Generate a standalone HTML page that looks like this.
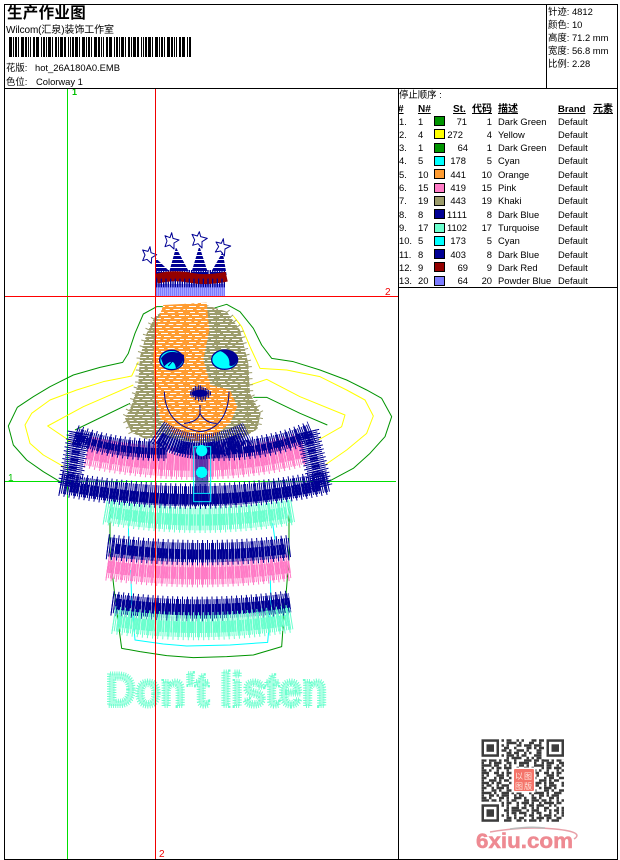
<!DOCTYPE html>
<html><head><meta charset="utf-8"><style>
html,body{margin:0;padding:0;background:#fff;width:620px;height:860px;overflow:hidden}
svg{display:block}
text{font-family:"Liberation Sans","Noto Sans CJK SC",sans-serif;font-size:9.4px;fill:#000}
.b{font-weight:bold;font-size:10px}
.e{text-anchor:end}
.ln,.s{fill:none;stroke-linejoin:round}
.bl{stroke:#000094}.pk{stroke:#ff7bc6}.tq{stroke:#6bffce}
</style></head><body>
<svg width="620" height="860" viewBox="0 0 620 860" xmlns="http://www.w3.org/2000/svg">
<defs>
<pattern id="kh" patternUnits="userSpaceOnUse" width="93" height="54"><rect width="93" height="54" fill="#9c9c6b"/><path stroke="#fff" stroke-width="3" d="M3 4.500h21M32 4.500h14M55 4.500h24M85 4.500h6M12 13.500h17M38 13.500h24M70 13.500h16M0 22.500h9M18 22.500h24M50 22.500h12M72 22.500h19M6 31.500h14M27 31.500h22M58 31.500h24M0 40.500h18M25 40.500h12M45 40.500h22M75 40.500h14M9 49.500h24M41 49.500h16M64 49.500h20"/></pattern>
<pattern id="or" patternUnits="userSpaceOnUse" width="93" height="54"><rect width="93" height="54" fill="#ff9c31"/><path stroke="#fff" stroke-width="3" d="M3 4.500h18M32 4.500h12M55 4.500h21M85 4.500h6M12 13.500h15M38 13.500h21M70 13.500h14M0 22.500h9M18 22.500h21M50 22.500h10M72 22.500h17M6 31.500h12M27 31.500h20M58 31.500h21M0 40.500h16M25 40.500h10M45 40.500h19M75 40.500h12M9 49.500h21M41 49.500h14M64 49.500h18"/></pattern>
<pattern id="bs" patternUnits="userSpaceOnUse" width="12" height="12"><rect width="12" height="12" fill="#000094"/><rect y="9" width="12" height="3" fill="#fff"/></pattern>
</defs>

<path d="M67.5 88V859" stroke="#00e000" stroke-width="1"/>
<path d="M4 481.500H396" stroke="#00e000" stroke-width="1"/>

<!-- torso -->
<g transform="translate(90 490) scale(.33333)">
<path class="ln" stroke="#009400" stroke-width="3" d="M60 50L60 190L72 295L85 400L95 475L150 485L230 497L310 503L410 500L490 495L575 470L580 400L590 290L597 200L597 50"/>
<path class="ln" stroke="#00ffff" stroke-width="3" d="M115 100L117 175M122 240L125 330L135 450L220 462L290 468L420 465L533 457L543 340L540 235M548 100L555 150"/>
<g class="s tq"><path stroke-width="84" stroke-dasharray="3 12" d="M45 62Q330 112 612 62"/><path stroke-width="68" stroke-dasharray="3 3" d="M45 62Q330 112 612 62"/><path stroke-width="34" stroke-dasharray="6 2" d="M65 68Q330 112 590 68"/></g>
<g class="s pk"><path stroke-width="84" stroke-dasharray="3 12" d="M52 230Q330 270 602 230"/><path stroke-width="68" stroke-dasharray="3 3" d="M52 230Q330 270 602 230"/><path stroke-width="36" stroke-dasharray="6 2" d="M52 230Q330 270 602 230"/></g>
<g class="s bl"><path stroke-width="76" stroke-dasharray="3 12" d="M52 170Q330 205 602 172"/><path stroke-width="58" stroke-dasharray="3 3" d="M52 170Q330 205 602 172"/><path stroke-width="30" stroke-dasharray="7 2" d="M75 176Q330 210 585 178"/></g>
<g class="s bl"><path stroke-width="74" stroke-dasharray="3 12" d="M66 340Q330 375 600 338"/><path stroke-width="58" stroke-dasharray="3 3" d="M66 340Q330 375 600 338"/><path stroke-width="34" stroke-dasharray="8 2" d="M76 342Q330 378 600 340"/></g>
<g class="s tq"><path stroke-width="84" stroke-dasharray="3 12" d="M70 390Q330 430 606 385"/><path stroke-width="66" stroke-dasharray="3 3" d="M70 390Q330 430 606 385"/><path stroke-width="34" stroke-dasharray="6 2" d="M82 394Q330 432 595 390"/></g>
</g>

<!-- main -->
<g transform="translate(0 290) scale(.33333)">
<path class="ln" stroke="#009400" stroke-width="3" d="M180 575L130 545L80 510L40 465L25 408L52 352L100 320L150 290L220 255L300 232L368 217L385 190L405 130L430 72L470 50L510 50M640 55L680 43L720 65L760 115L785 165L815 205L880 215L960 240L1040 270L1100 300L1145 325L1175 380L1155 440L1110 490L1060 535L985 575M982 405L900 370L800 322L760 322M225 420L390 340"/>
<path class="ln" stroke="#ffff00" stroke-width="3" d="M200 535L130 495L90 460L75 405L95 370L150 330L230 300L310 275L395 258L415 215M700 78L725 110L750 170L780 235L860 240L960 260L1040 300L1095 330L1120 378L1100 430L1040 480L975 525M220 460L143 408L250 350L400 285M750 285L800 268L900 320L1035 375L1025 410L955 450"/>
<!-- pink -->
<g class="s pk"><path stroke-width="104" stroke-dasharray="3 12" d="M262 482Q600 555 912 477"/><path stroke-width="88" stroke-dasharray="3 3" d="M262 482Q600 555 912 477"/><path stroke-width="50" stroke-dasharray="6 2" d="M262 482Q600 555 912 477"/></g>
<!-- hair -->
<path fill="url(#kh)" d="M510 48L610 42L680 65L720 120L745 220L750 310L782 370L772 418L730 442L600 460L480 440L440 448L395 428L375 385L395 345L415 280L420 200L440 130L465 80Z"/>
<path class="s" stroke="#9c9c6b" stroke-width="20" stroke-dasharray="3 15" d="M680 65L720 120L745 220L750 310L782 370L772 418M395 428L375 385L395 345L415 280L420 200L440 130L465 80"/>
<!-- face -->
<path fill="url(#or)" d="M490 45L620 38L628 120L610 210L632 285L690 300L712 350L690 400L640 440L590 455L520 430L480 385L465 300L460 200L470 100Z"/>
<!-- collar -->
<g class="s bl"><path stroke-width="66" stroke-dasharray="3 12" d="M225 437Q350 482 500 480M640 480Q800 482 935 425"/><path stroke-width="50" stroke-dasharray="3 3" d="M225 437Q350 482 500 480M640 480Q800 482 935 425"/><path stroke-width="20" stroke-dasharray="7 2" d="M232 442Q350 486 500 484M640 484Q800 486 925 432"/></g>
<path class="s bl" stroke-width="76" stroke-dasharray="3 4" d="M472 425Q590 510 745 432"/>
<path class="s bl" stroke-width="38" stroke-dasharray="6 2" d="M480 445Q590 510 730 445"/>
<g class="s bl"><path stroke-width="72" stroke-dasharray="3 9" d="M238 428L208 590M922 425L962 592"/><path stroke-width="58" stroke-dasharray="3 3" d="M238 428L208 590M922 425L962 592"/><path stroke-width="24" stroke-dasharray="5 3" d="M238 428L208 590M922 425L962 592"/></g>
<g class="s bl"><path stroke-width="76" stroke-dasharray="3 12" d="M182 580Q600 660 985 575"/><path stroke-width="60" stroke-dasharray="3 3" d="M182 580Q600 660 985 575"/><path stroke-width="32" stroke-dasharray="8 2" d="M210 590Q600 668 960 586"/></g>
<!-- tie -->
<path stroke="#000094" stroke-width="40" stroke-dasharray="4 2" d="M605 490V632" fill="none"/>
<rect x="581" y="470" width="51" height="165" fill="none" stroke="#00e8ff" stroke-width="3"/>
<circle cx="605" cy="482" r="17" fill="#00ffff"/><circle cx="605" cy="547" r="17" fill="#00ffff"/>
<path d="M581 610H632" stroke="#00e8ff" stroke-width="3"/>
<!-- eyes -->
<ellipse cx="515" cy="210" rx="36" ry="29" fill="#00ffff" stroke="#000094" stroke-width="4"/>
<path d="M483 205Q505 172 552 195Q552 222 528 235Q522 198 492 230Z" fill="#000094"/>
<path d="M495 222L515 195M505 228L525 205" stroke="#000094" stroke-width="3" fill="none"/>
<ellipse cx="674" cy="209" rx="39" ry="29" fill="#00ffff" stroke="#000094" stroke-width="4"/>
<path d="M658 182Q700 172 714 208Q702 234 688 226Q692 195 658 182Z" fill="#000094"/>
<!-- nose -->
<path stroke="#000094" stroke-width="3" fill="none" d="M572 304v12M576 298v24M581 294v28M586 288v42M591 290v36M596 286v48M601 286v44M606 290v46M611 292v36M616 294v38M621 296v26M626 300v24M631 304v12"/>
<ellipse cx="600" cy="310" rx="24" ry="11" fill="#000094"/>
<path class="ln" stroke="#000094" stroke-width="3" d="M493 305C495 380 540 415 600 425C650 420 686 380 687 305M600 345V370C595 390 575 398 552 400M600 370C612 392 630 400 650 400"/>
</g>

<text x="106" y="706" style="font-size:47px;font-weight:bold;fill:#6bffce;fill-opacity:.55;stroke:#6bffce;stroke-width:4;stroke-dasharray:1 1.500" textLength="221" lengthAdjust="spacingAndGlyphs">Don't listen</text>

<!-- crown -->
<g transform="translate(120 220) scale(.33333)">
<path fill="url(#bs)" d="M105 112L160 165H106ZM168 82L212 165H145ZM238 78L266 165H212ZM308 96L320 165H268Z"/>
<path class="s" stroke="#7b7bff" stroke-width="36" stroke-dasharray="5 1" d="M107 210H315"/>
<path class="s" stroke="#000094" stroke-width="52" stroke-dasharray="4 3" d="M108 176H318"/>
<path class="s" stroke="#940000" stroke-width="30" d="M110 176Q160 163 210 173T320 170"/>
<path class="s" stroke="#000094" stroke-width="20" stroke-dasharray="4 10" d="M108 186H318"/>
<g class="ln" stroke="#000094" stroke-width="3" fill="none">
<path d="M90 80L93 98L110 104L95 113L94 130L81 118L68 122L75 105L68 90L84 94Z"/>
<path d="M155 38L159 55L177 60L162 69L162 87L149 75L135 80L141 63L135 47L150 53Z"/>
<path d="M238 35L242 50L262 55L246 65L246 84L234 71L218 76L224 60L216 43L232 48Z"/>
<path d="M310 56L312 73L332 78L315 87L313 108L302 93L286 96L296 80L288 66L304 70Z"/>
</g>
</g>

<path d="M155.500 88V859" stroke="#f00000" stroke-width="1"/>
<path d="M4 296.500H398" stroke="#ff0000" stroke-width="1"/>
<text x="72" y="95" style="font-size:9px;font-weight:bold;fill:#00c000">1</text>
<text x="8" y="481" style="font-size:10px;fill:#00c000">1</text>
<text x="385" y="295" style="font-size:10px;fill:#f00000">2</text>
<text x="159" y="857" style="font-size:10px;fill:#f00000">2</text>

<path d="M4.500 4.500H617.500V859.500H4.500ZM4.500 88.500H617.500M546.500 4.500V88.500M398.500 88.500V859.500M398.500 287.500H617.500" fill="none" stroke="#000" stroke-width="1"/>

<text x="7" y="18" style="font-size:15.500px;font-weight:bold;letter-spacing:.3px">生产作业图</text>
<text x="6" y="33" style="font-size:10px;letter-spacing:-.1px">Wilcom(汇泉)装饰工作室</text>
<path d="M9 47H191" stroke="#000" stroke-width="20" stroke-dasharray="3 1 1 1 2 1 1 2 3 1 2 1 1 1 1 2 2 1 3 2 1 1 2 1 1 1 3 1 1 2 2 1 1 1 3 1 2 2 1 1 1 1 2 1 3 1 1 2"/>
<text x="6" y="71">花版:</text><text x="35" y="71">hot_26A180A0.EMB</text>
<text x="6" y="85">色位:</text><text x="36" y="85">Colorway 1</text>

<text x="548" y="15">针迹: 4812</text>
<text x="548" y="28">颜色: 10</text>
<text x="548" y="41">高度: 71.2 mm</text>
<text x="548" y="54">宽度: 56.8 mm</text>
<text x="548" y="67">比例: 2.28</text>

<text x="399" y="98">停止顺序 :</text>
<g style="text-decoration:underline">
<text class="b" x="398" y="112">#</text>
<text class="b" x="418" y="112">N#</text>
<text class="b" x="453" y="112">St.</text>
<text class="b" x="472" y="112">代码</text>
<text class="b" x="498" y="112">描述</text>
<text class="b" x="558" y="112" style="font-size:9.500px">Brand</text>
<text class="b" x="593" y="112">元素</text>
</g>

<g stroke="#000" stroke-width="1">
<rect x="434.500" y="116.500" width="10" height="9" fill="#009400"/>
<rect x="434.500" y="129.500" width="10" height="9" fill="#ffff00"/>
<rect x="434.500" y="143.500" width="10" height="9" fill="#009400"/>
<rect x="434.500" y="156.500" width="10" height="9" fill="#00ffff"/>
<rect x="434.500" y="169.500" width="10" height="9" fill="#ff9c31"/>
<rect x="434.500" y="183.500" width="10" height="9" fill="#ff7bc6"/>
<rect x="434.500" y="196.500" width="10" height="9" fill="#9c9c6b"/>
<rect x="434.500" y="209.500" width="10" height="9" fill="#000094"/>
<rect x="434.500" y="223.500" width="10" height="9" fill="#6bffce"/>
<rect x="434.500" y="236.500" width="10" height="9" fill="#00ffff"/>
<rect x="434.500" y="249.500" width="10" height="9" fill="#000094"/>
<rect x="434.500" y="262.500" width="10" height="9" fill="#940000"/>
<rect x="434.500" y="276.500" width="10" height="9" fill="#7b7bff"/>
</g>

<text x="399" y="125">1.</text><text x="418" y="125">1</text><text class="e" x="467" y="125">71</text><text class="e" x="492" y="125">1</text><text x="498" y="125">Dark Green</text><text x="558" y="125">Default</text>
<text x="399" y="138">2.</text><text x="418" y="138">4</text><text class="e" x="463" y="138">272</text><text class="e" x="492" y="138">4</text><text x="498" y="138">Yellow</text><text x="558" y="138">Default</text>
<text x="399" y="151">3.</text><text x="418" y="151">1</text><text class="e" x="468" y="151">64</text><text class="e" x="492" y="151">1</text><text x="498" y="151">Dark Green</text><text x="558" y="151">Default</text>
<text x="399" y="164">4.</text><text x="418" y="164">5</text><text class="e" x="466" y="164">178</text><text class="e" x="492" y="164">5</text><text x="498" y="164">Cyan</text><text x="558" y="164">Default</text>
<text x="399" y="178">5.</text><text x="418" y="178">10</text><text class="e" x="466" y="178">441</text><text class="e" x="492" y="178">10</text><text x="498" y="178">Orange</text><text x="558" y="178">Default</text>
<text x="399" y="191">6.</text><text x="418" y="191">15</text><text class="e" x="466" y="191">419</text><text class="e" x="492" y="191">15</text><text x="498" y="191">Pink</text><text x="558" y="191">Default</text>
<text x="399" y="204">7.</text><text x="418" y="204">19</text><text class="e" x="466" y="204">443</text><text class="e" x="492" y="204">19</text><text x="498" y="204">Khaki</text><text x="558" y="204">Default</text>
<text x="399" y="218">8.</text><text x="418" y="218">8</text><text class="e" x="467" y="218" textLength="20">1111</text><text class="e" x="492" y="218">8</text><text x="498" y="218">Dark Blue</text><text x="558" y="218">Default</text>
<text x="399" y="231">9.</text><text x="418" y="231">17</text><text class="e" x="467" y="231" textLength="20">1102</text><text class="e" x="492" y="231">17</text><text x="498" y="231">Turquoise</text><text x="558" y="231">Default</text>
<text x="399" y="244">10.</text><text x="418" y="244">5</text><text class="e" x="466" y="244">173</text><text class="e" x="492" y="244">5</text><text x="498" y="244">Cyan</text><text x="558" y="244">Default</text>
<text x="399" y="258">11.</text><text x="418" y="258">8</text><text class="e" x="466" y="258">403</text><text class="e" x="492" y="258">8</text><text x="498" y="258">Dark Blue</text><text x="558" y="258">Default</text>
<text x="399" y="271">12.</text><text x="418" y="271">9</text><text class="e" x="468" y="271">69</text><text class="e" x="492" y="271">9</text><text x="498" y="271">Dark Red</text><text x="558" y="271">Default</text>
<text x="399" y="284">13.</text><text x="418" y="284">20</text><text class="e" x="468" y="284">64</text><text class="e" x="492" y="284">20</text><text x="498" y="284">Powder Blue</text><text x="558" y="284">Default</text>

<!-- QR -->
<g transform="translate(481.500 739.300) scale(2.500)" stroke="#3c3c3c" stroke-width="1" fill="none">
<path d="M0 .5H33" stroke-dasharray="2 1 1 2 3 1 2 2 1 1 1 3 2 1"/>
<path d="M0 1.500H33" stroke-dasharray="1 3 2 1 1 2 4 1 1 3 2 2"/>
<path d="M0 2.500H33" stroke-dasharray="3 2 1 1 2 1 1 3 2 1 3 1"/>
<path d="M0 3.500H33" stroke-dasharray="1 1 3 2 1 1 2 2 1 4 2 1"/>
<path d="M0 4.500H33" stroke-dasharray="2 2 1 1 4 1 1 2 3 1 1 3"/>
<path d="M0 5.500H33" stroke-dasharray="1 2 2 1 1 3 2 1 2 2 1 1"/>
<path d="M0 6.500H33" stroke-dasharray="3 1 1 2 2 1 3 1 1 1 2 3"/>
<path d="M0 7.500H33" stroke-dasharray="1 1 2 3 1 2 1 1 4 2 1 1"/>
<path d="M0 8.500H33" stroke-dasharray="2 1 3 1 1 1 2 2 1 3 3 1"/>
<path d="M0 9.500H33" stroke-dasharray="1 2 1 1 3 2 2 1 1 1 4 2"/>
<path d="M0 10.500H33" stroke-dasharray="4 1 2 2 1 1 1 3 2 1 1 2"/>
<path d="M0 11.500H33" stroke-dasharray="1 3 1 1 2 1 3 2 1 2 2 1"/>
<path d="M0 12.500H33" stroke-dasharray="2 1 1 2 1 3 1 1 3 1 2 2"/>
<path d="M0 13.500H33" stroke-dasharray="3 2 2 1 1 1 2 3 1 1 1 2"/>
<path d="M0 14.500H33" stroke-dasharray="1 1 1 3 3 1 1 2 2 1 3 1"/>
<path d="M0 15.500H33" stroke-dasharray="2 3 1 1 2 2 3 1 1 1 1 2"/>
<path d="M0 16.500H33" stroke-dasharray="1 2 3 1 1 1 2 2 1 3 2 1"/>
<path d="M0 17.500H33" stroke-dasharray="3 1 1 1 2 3 1 1 4 1 1 2"/>
<path d="M0 18.500H33" stroke-dasharray="1 1 2 2 1 1 3 2 1 2 2 1"/>
<path d="M0 19.500H33" stroke-dasharray="2 2 1 1 3 1 1 3 2 1 1 1"/>
<path d="M0 20.500H33" stroke-dasharray="1 3 2 1 1 2 2 1 1 1 4 2"/>
<path d="M0 21.500H33" stroke-dasharray="4 1 1 2 3 1 1 1 2 3 1 1"/>
<path d="M0 22.500H33" stroke-dasharray="1 2 2 1 1 1 3 2 1 1 2 3"/>
<path d="M0 23.500H33" stroke-dasharray="2 1 1 3 2 1 1 2 3 1 1 2"/>
<path d="M0 24.500H33" stroke-dasharray="3 1 2 1 1 2 1 1 2 3 2 1"/>
<path d="M0 25.500H33" stroke-dasharray="1 2 1 1 4 1 2 2 1 1 3 1"/>
<path d="M0 26.500H33" stroke-dasharray="2 1 3 2 1 1 1 3 1 2 1 1"/>
<path d="M0 27.500H33" stroke-dasharray="1 1 1 2 2 3 1 1 3 1 2 2"/>
<path d="M0 28.500H33" stroke-dasharray="3 2 1 1 1 1 2 1 4 2 1 1"/>
<path d="M0 29.500H33" stroke-dasharray="1 1 2 3 1 2 1 1 2 1 3 2"/>
<path d="M0 30.500H33" stroke-dasharray="2 2 1 1 3 1 1 2 1 3 1 1"/>
<path d="M0 31.500H33" stroke-dasharray="1 1 3 1 2 2 2 1 1 1 2 3"/>
<path d="M0 32.500H33" stroke-dasharray="3 1 1 2 1 1 3 2 2 1 1 1"/>
<g fill="#fff" stroke="none"><rect x="-.2" y="-.2" width="8.200" height="8.200"/><rect x="25" y="-.2" width="8.200" height="8.200"/><rect x="-.2" y="25" width="8.200" height="8.200"/></g>
<g fill="none"><rect x=".5" y=".5" width="6" height="6"/><rect x="26.500" y=".5" width="6" height="6"/><rect x=".5" y="26.500" width="6" height="6"/></g>
<g fill="#3c3c3c" stroke="none"><rect x="2" y="2" width="3" height="3"/><rect x="28" y="2" width="3" height="3"/><rect x="2" y="28" width="3" height="3"/></g>
</g>
<rect x="511.500" y="767.500" width="24" height="25" fill="#fff"/>
<rect x="514" y="769" width="20" height="22" rx="1" fill="#f4746a"/>
<text x="515" y="779" style="font-size:8px;fill:#ffe8e0">以</text><text x="524" y="779" style="font-size:8px;fill:#ffe8e0">图</text>
<text x="515" y="789" style="font-size:8px;fill:#ffe8e0">图</text><text x="524" y="789" style="font-size:8px;fill:#ffe8e0">版</text>

<path d="M490 832Q525 826 555 829T574 839" fill="none" stroke="#e8a0a8" stroke-width="1.500"/>
<path d="M510 829Q530 826 545 828" fill="none" stroke="#bbb" stroke-width="1.500"/>
<text x="476" y="848" style="font-size:21px;font-weight:bold;fill:#ee8a92;stroke:#ee8a92;stroke-width:.5" textLength="97" lengthAdjust="spacingAndGlyphs">6xiu.com</text>
</svg>
</body></html>
